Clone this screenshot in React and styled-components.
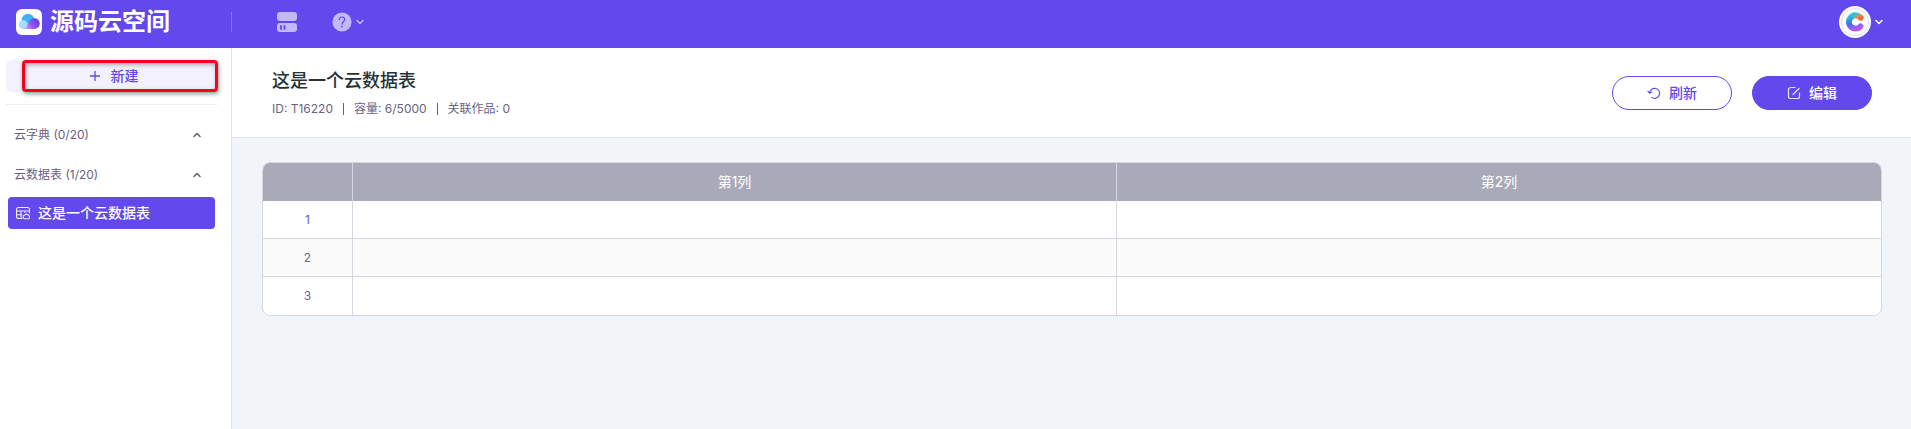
import React, { useState } from 'react';
import styled, { createGlobalStyle, css } from 'styled-components';

const columns = ['第1列', '第2列'];
const rows = [1, 2, 3];

function LogoIcon() {
  return (
    <svg width="26" height="26" viewBox="0 0 26 26" aria-hidden="true">
      <defs>
        <linearGradient id="cloudFront" x1="0" y1="0.8" x2="1" y2="0.3">
          <stop offset="0" stopColor="#dc90fa" />
          <stop offset="0.5" stopColor="#8d50f0" />
          <stop offset="1" stopColor="#5b3ee8" />
        </linearGradient>
      </defs>
      <rect width="26" height="26" rx="6" fill="#fff" />
      <circle cx="12" cy="11" r="6.2" fill="#3fb2fb" />
      <path d="M7 12h9v8H7z" fill="#3fb2fb" />
      <circle cx="7.2" cy="15.700" r="4.400" fill="#a9dcfb" />
      <path d="M8.500 20c2.400-1 3-3.400 4-6 1-3 3-4.800 5.700-4.800a5.400 5.400 0 0 1 .3 10.800z" fill="url(#cloudFront)" />
    </svg>
  );
}

function ServerIcon() {
  return (
    <svg width="20" height="20" viewBox="0 0 20 20" aria-hidden="true">
      <rect width="20" height="9" rx="3" fill="#c3b9fa" />
      <rect y="11" width="20" height="9" rx="3" fill="#c3b9fa" />
      <path d="M4 14v3M7.500 14v3" stroke="#6248ed" strokeWidth="1.800" strokeLinecap="round" />
    </svg>
  );
}

function HelpIcon() {
  return (
    <svg width="20" height="20" viewBox="0 0 20 20" aria-hidden="true">
      <circle cx="10" cy="10" r="9.600" fill="#c3b9fa" />
      <path d="M7.300 7.700c0-1.700 1.100-2.700 2.700-2.700s2.700 1 2.700 2.500c0 1.900-2.700 2.100-2.700 4.700" fill="none" stroke="#6248ed" strokeWidth="1.200" strokeLinecap="round" />
      <circle cx="10" cy="14.600" r="0.900" fill="#6248ed" />
    </svg>
  );
}

function AvatarIcon() {
  return (
    <svg width="32" height="32" viewBox="0 0 32 32" aria-hidden="true">
      <defs>
        <linearGradient id="avatarBody" x1="0.3" y1="0" x2="0.6" y2="1">
          <stop offset="0" stopColor="#27c6d6" />
          <stop offset="0.5" stopColor="#3a73ea" />
          <stop offset="1" stopColor="#b457ee" />
        </linearGradient>
        <linearGradient id="avatarTip" x1="0" y1="0" x2="1" y2="0.6">
          <stop offset="0" stopColor="#27c6d6" />
          <stop offset="0.6" stopColor="#f58a4b" />
          <stop offset="1" stopColor="#f4693c" />
        </linearGradient>
      </defs>
      <circle cx="16" cy="16" r="16" fill="#fff" />
      <circle cx="16" cy="16" r="13.500" fill="none" stroke="#d5cffa" strokeWidth="0.800" />
      <path d="M21.500 20.300A6.600 6.600 0 1 1 15.600 9.400" fill="none" stroke="url(#avatarBody)" strokeWidth="5.800" strokeLinecap="round" />
      <path d="M15.600 9.400c2.400-.2 4.600.6 6.200 2.400" fill="none" stroke="url(#avatarTip)" strokeWidth="5.800" strokeLinecap="round" />
    </svg>
  );
}

function Chevron({ up, color }) {
  return (
    <svg width="8" height="6" viewBox="0 0 8 6" fill="none" stroke={color} strokeWidth="1.500" strokeLinecap="round" strokeLinejoin="round" aria-hidden="true">
      <path d={up ? 'M1 4.500l3-3 3 3' : 'M1 1.500l3 3 3-3'} />
    </svg>
  );
}

function PlusIcon() {
  return (
    <svg width="12" height="12" viewBox="0 0 12 12" stroke="currentColor" strokeWidth="1.300" aria-hidden="true">
      <path d="M6 1v10M1 6h10" />
    </svg>
  );
}

function TableIcon() {
  return (
    <svg width="14" height="14" viewBox="0 0 14 14" fill="none" stroke="#f0edfe" strokeWidth="1.100" strokeLinecap="round" strokeLinejoin="round" aria-hidden="true">
      <path d="M6 12.500H2.500a2 2 0 0 1-2-2v-7a2 2 0 0 1 2-2h9a2 2 0 0 1 2 2V7M.5 5h13M.5 8.700h5.500M5 5v7.500M9 5v1.500" />
      <path d="M8.800 12.700a1.700 1.700 0 0 1-.2-3.400 2 2 0 0 1 3.800.4 1.500 1.500 0 0 1-.1 3z" />
    </svg>
  );
}

function RefreshIcon() {
  return (
    <svg width="14" height="14" viewBox="0 0 14 14" fill="none" stroke="currentColor" strokeWidth="1.100" strokeLinecap="round" strokeLinejoin="round" aria-hidden="true">
      <path d="M2.600 6.800a5 5 0 1 1 2 4.600M1 5.300l1.500 1.900L4.700 6" />
    </svg>
  );
}

function EditIcon() {
  return (
    <svg width="14" height="14" viewBox="0 0 14 14" fill="none" stroke="#e6e2fd" strokeWidth="1.200" strokeLinecap="round" strokeLinejoin="round" aria-hidden="true">
      <path d="M8 1.500H3.500a2 2 0 0 0-2 2v7a2 2 0 0 0 2 2h7a2 2 0 0 0 2-2V7M6 8.500l6-6" />
    </svg>
  );
}

function SidebarGroup({ title, children }) {
  const [open, setOpen] = useState(true);
  return (
    <section>
      <GroupToggle type="button" aria-expanded={open} onClick={() => setOpen(!open)}>
        {title}
        <Chevron up={open} color="#6a5f80" />
      </GroupToggle>
      {open && children}
    </section>
  );
}

function App() {
  return (
    <Page>
      <GlobalStyle />
      <TopBar>
        <Brand href="#home">
          <LogoIcon />
          源码云空间
        </Brand>
        <TopNav>
          <IconButton type="button" aria-label="服务器"><ServerIcon /></IconButton>
          <IconButton type="button" aria-label="帮助">
            <HelpIcon />
            <Chevron color="#c3b9fa" />
          </IconButton>
        </TopNav>
        <IconButton type="button" aria-label="账号">
          <AvatarIcon />
          <Chevron color="#fff" />
        </IconButton>
      </TopBar>
      <Body>
        <Sidebar>
          <NewArea>
            <NewButton type="button">
              <PlusIcon />
              新建
            </NewButton>
            <Highlight />
          </NewArea>
          <SidebarGroup title="云字典 (0/20)" />
          <SidebarGroup title="云数据表 (1/20)">
            <SidebarItem href="#T16220" aria-current="page">
              <TableIcon />
              这是一个云数据表
            </SidebarItem>
          </SidebarGroup>
        </Sidebar>
        <Main>
          <MainHeader>
            <div>
              <Title>这是一个云数据表</Title>
              <Meta>
                <MetaItem>ID: T16220</MetaItem>
                <MetaItem>容量: 6/5000</MetaItem>
                <MetaItem>关联作品: 0</MetaItem>
              </Meta>
            </div>
            <Actions>
              <ActionButton type="button">
                <RefreshIcon />
                刷新
              </ActionButton>
              <ActionButton type="button" $primary>
                <EditIcon />
                编辑
              </ActionButton>
            </Actions>
          </MainHeader>
          <TableFrame>
            <DataTable>
              <thead>
                <tr>
                  <IndexHead aria-label="行" />
                  {columns.map((name) => <HeadCell key={name} scope="col">{name}</HeadCell>)}
                </tr>
              </thead>
              <tbody>
                {rows.map((row) => (
                  <Row key={row}>
                    <Cell>{row}</Cell>
                    {columns.map((name) => <Cell key={name} />)}
                  </Row>
                ))}
              </tbody>
            </DataTable>
          </TableFrame>
        </Main>
      </Body>
    </Page>
  );
}

export default App;

const GlobalStyle = createGlobalStyle`
  *, *::before, *::after {
    box-sizing: border-box;
  }
  body {
    margin: 0;
    font-family: Inter, 'Noto Sans CJK SC', sans-serif;
    font-size: 14px;
    line-height: 20px;
  }
  button {
    font: inherit;
    cursor: pointer;
  }
`;

const Page = styled.div`
  display: flex;
  flex-direction: column;
  min-height: 100vh;
`;

const TopBar = styled.header`
  display: flex;
  align-items: center;
  height: 48px;
  padding: 0 28px 4px 16px;
  background: #6248ed;
`;

const Brand = styled.a`
  display: flex;
  align-items: center;
  gap: 8px;
  width: 216px;
  height: 20px;
  border-right: 1px solid #8772f2;
  color: #fff;
  font-size: 24px;
  font-weight: 700;
  text-decoration: none;
`;

const TopNav = styled.nav`
  display: flex;
  flex: 1;
  align-items: center;
  gap: 35px;
  padding-left: 45px;
`;

const IconButton = styled.button`
  display: flex;
  align-items: center;
  gap: 4px;
  padding: 0;
  border: 0;
  background: none;
`;

const Body = styled.div`
  display: flex;
  flex: 1;
`;

const Sidebar = styled.aside`
  flex: none;
  width: 232px;
  padding-top: 12px;
  border-right: 1px solid #e1e1e6;
  background: #fff;
`;

const NewArea = styled.div`
  position: relative;
  margin: 0 14px 10px 6px;
  padding-bottom: 12px;
  border-bottom: 1px solid #ececf0;
`;

const NewButton = styled.button`
  display: flex;
  align-items: center;
  justify-content: center;
  gap: 10px;
  width: 100%;
  height: 32px;
  padding: 0 4px 0 8px;
  border: 0;
  border-radius: 6px;
  background: #f3f1fe;
  color: #6248ed;
  font-weight: 500;
`;

const Highlight = styled.div`
  position: absolute;
  top: 0;
  left: 16px;
  right: -1px;
  height: 32px;
  border: 3px solid #f5001d;
  border-radius: 4px;
  box-shadow: 1px 2px 4px rgba(0, 0, 0, 0.4), inset 1px 2px 4px rgba(0, 0, 0, 0.3);
  pointer-events: none;
`;

const GroupToggle = styled.button`
  display: flex;
  align-items: center;
  justify-content: space-between;
  width: 100%;
  height: 40px;
  padding: 0 30px 0 14px;
  border: 0;
  background: none;
  color: #6a5f80;
  font-size: 12px;
`;

const SidebarItem = styled.a`
  display: flex;
  align-items: center;
  gap: 8px;
  height: 32px;
  margin: 2px 16px 0 8px;
  padding: 0 8px;
  border-radius: 4px;
  background: #6248ed;
  color: #fff;
  font-weight: 500;
  text-decoration: none;
`;

const Main = styled.main`
  flex: 1;
  min-width: 0;
  background: #f1f5f9;
`;

const MainHeader = styled.div`
  display: flex;
  align-items: center;
  justify-content: space-between;
  height: 90px;
  padding: 0 39px 0 40px;
  border-bottom: 1px solid #dfe2e7;
  background: #fff;
`;

const Title = styled.h1`
  margin: 0;
  color: #263238;
  font-size: 18px;
  font-weight: 500;
  line-height: 28px;
`;

const Meta = styled.div`
  display: flex;
  margin-top: 4px;
  color: #6a5f80;
  font-size: 12px;
  line-height: 20px;
`;

const MetaItem = styled.span`
  display: flex;
  align-items: center;

  & + &::before {
    content: '';
    width: 1px;
    height: 12px;
    margin: 0 10px;
    background: #6a5f80;
  }
`;

const Actions = styled.div`
  display: flex;
  gap: 20px;
`;

const ActionButton = styled.button`
  display: flex;
  align-items: center;
  justify-content: center;
  gap: 8px;
  width: 120px;
  height: 34px;
  border: 1px solid #6248ed;
  border-radius: 17px;
  background: #fff;
  color: #6248ed;
  font-weight: 500;

  ${({ $primary }) => $primary && css`
    background: #6248ed;
    color: #fff;
  `}
`;

const TableFrame = styled.div`
  margin: 24px 29px 24px 30px;
  border: 1px solid #d5d6e0;
  border-radius: 8px;
  background: #fff;
  overflow: hidden;
`;

const DataTable = styled.table`
  width: 100%;
  border-spacing: 0;
  table-layout: fixed;
`;

const HeadCell = styled.th`
  height: 38px;
  padding: 0;
  border-right: 1px solid #d5d6e0;
  background: #a9aab8;
  color: #fff;
  font-weight: 400;

  &:last-child {
    border-right: 0;
  }
`;

const IndexHead = styled(HeadCell)`
  width: 90px;
`;

const Cell = styled.td`
  height: 38px;
  padding: 0;
  border-right: 1px solid #d5d6e0;
  border-bottom: 1px solid #d5d6e0;
  color: #6c6394;
  font-size: 12px;
  text-align: center;

  &:last-child {
    border-right: 0;
  }
`;

const Row = styled.tr`
  &:nth-child(even) {
    background: #fbfbfb;
  }

  &:last-child ${Cell} {
    border-bottom: 0;
  }
`;
